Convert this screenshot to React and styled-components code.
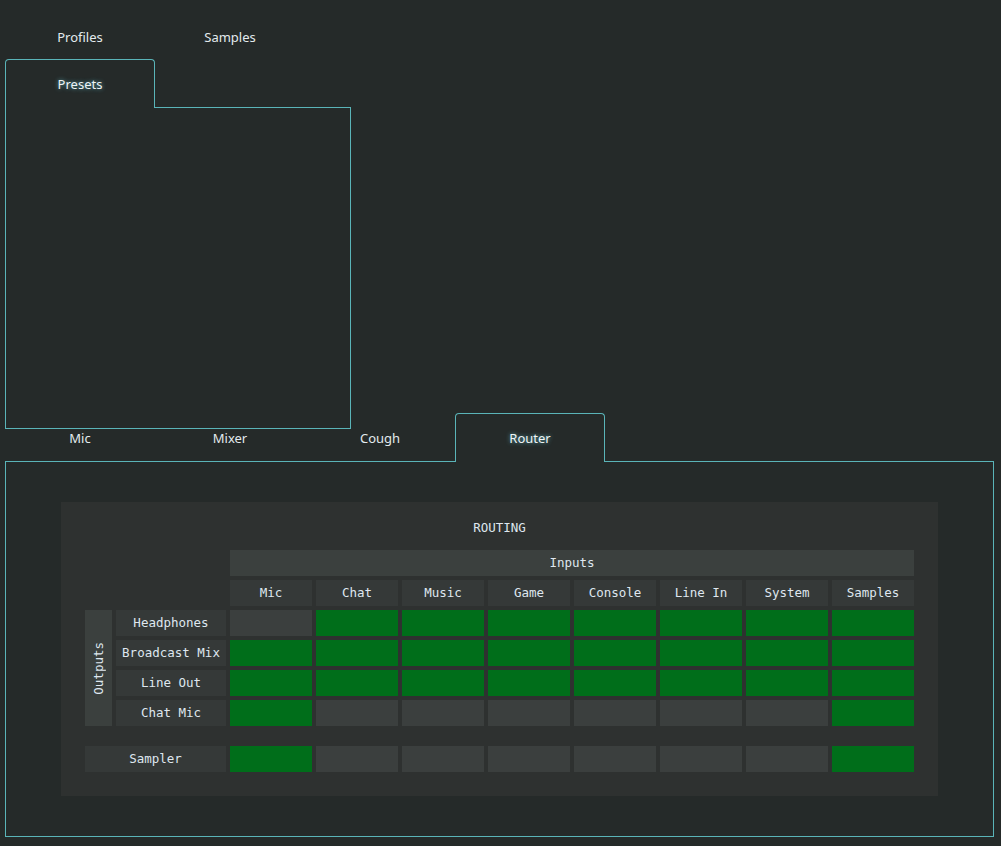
import React from 'react';
import styled, { createGlobalStyle } from 'styled-components';

const inputs = ['Mic', 'Chat', 'Music', 'Game', 'Console', 'Line In', 'System', 'Samples'];

const outputs = [
  { name: 'Headphones', on: [0, 1, 1, 1, 1, 1, 1, 1] },
  { name: 'Broadcast Mix', on: [1, 1, 1, 1, 1, 1, 1, 1] },
  { name: 'Line Out', on: [1, 1, 1, 1, 1, 1, 1, 1] },
  { name: 'Chat Mic', on: [1, 0, 0, 0, 0, 0, 0, 1] },
];

const sampler = [1, 0, 0, 0, 0, 0, 0, 1];

const App = () => {
  return (
    <Page>
      <GlobalStyle />
      <TabWidget>
        <TabRow $height={46}>
          <Tab>Profiles</Tab>
          <Tab>Samples</Tab>
        </TabRow>
        <TabRow $height={48}>
          <Tab $active>Presets</Tab>
        </TabRow>
        <Panel $width={346} $height={322} />
      </TabWidget>

      <TabWidget $overlap>
        <TabRow $height={48}>
          <Tab>Mic</Tab>
          <Tab>Mixer</Tab>
          <Tab>Cough</Tab>
          <Tab $active>Router</Tab>
        </TabRow>
        <Panel $width={989} $height={376}>
          <Card>
            <Title>ROUTING</Title>
            <Matrix>
              <InputsHeader>Inputs</InputsHeader>
              {inputs.map((name, i) => (
                <Label key={name} style={{ gridColumn: i + 3, gridRow: 2 }}>
                  {name}
                </Label>
              ))}
              <OutputsLabel>
                <span>Outputs</span>
              </OutputsLabel>
              {outputs.map((row, r) => (
                <React.Fragment key={row.name}>
                  <Label style={{ gridColumn: 2, gridRow: r + 3 }}>{row.name}</Label>
                  {row.on.map((on, c) => (
                    <Cell key={c} $on={!!on} style={{ gridColumn: c + 3, gridRow: r + 3 }} />
                  ))}
                </React.Fragment>
              ))}
              <SamplerLabel>Sampler</SamplerLabel>
              {sampler.map((on, c) => (
                <Cell key={c} $on={!!on} style={{ gridColumn: c + 3, gridRow: 8 }} />
              ))}
            </Matrix>
          </Card>
        </Panel>
      </TabWidget>
    </Page>
  );
};

const GlobalStyle = createGlobalStyle`
  html, body {
    margin: 0;
    padding: 0;
    background: #252a29;
  }
  body {
    font-family: "Noto Sans", "Open Sans", sans-serif;
    color: #e3eaee;
  }
`;

const Page = styled.div`
  width: 1001px;
  height: 846px;
  box-sizing: border-box;
  padding: 13px 0 0 5px;
  display: flex;
  flex-direction: column;
  overflow: hidden;
`;

const TabWidget = styled.div`
  display: flex;
  flex-direction: column;
  margin-top: ${(p) => (p.$overlap ? '-16px' : '0')};
`;

const TabRow = styled.div`
  display: flex;
  height: ${(p) => p.$height}px;
  align-items: stretch;
`;

const Tab = styled.div`
  width: 150px;
  box-sizing: border-box;
  display: flex;
  align-items: center;
  justify-content: center;
  font-size: 13px;
  color: #e3eaee;
  padding-top: 2px;
  position: relative;
  z-index: 1;
  ${(p) =>
    p.$active &&
    `
    border: 1px solid #5ab4b8;
    border-bottom: none;
    border-radius: 4px 4px 0 0;
    background: #252a29;
    margin-bottom: -1px;
    padding-top: 0;
    color: #eef4f6;
    text-shadow: 0 0 4px rgba(110, 215, 230, 0.75);
  `}
`;

const Panel = styled.div`
  width: ${(p) => p.$width}px;
  height: ${(p) => p.$height}px;
  box-sizing: border-box;
  border: 1px solid #5ab4b8;
  padding: 40px 0 0 55px;
`;

const Card = styled.div`
  width: 877px;
  height: 294px;
  box-sizing: border-box;
  background: #2e3130;
  padding: 16px 24px 24px 24px;
  font-family: "DejaVu Sans Mono", "Liberation Mono", monospace;
  font-size: 12.5px;
  color: #dfe7ef;
`;

const Title = styled.div`
  height: 20px;
  line-height: 20px;
  text-align: center;
  margin-bottom: 12px;
`;

const Matrix = styled.div`
  display: grid;
  grid-template-columns: 27px 110px repeat(8, 82px);
  grid-template-rows: repeat(6, 26px) 12px 26px;
  gap: 4px;
`;

const Block = styled.div`
  display: flex;
  align-items: center;
  justify-content: center;
  white-space: nowrap;
  padding-bottom: 1px;
`;

const InputsHeader = styled(Block)`
  grid-column: 3 / span 8;
  grid-row: 1;
  background: #3b403e;
`;

const Label = styled(Block)`
  background: #353938;
`;

const OutputsLabel = styled(Block)`
  grid-column: 1;
  grid-row: 3 / span 4;
  background: #3b403e;
  padding-bottom: 0;
  span {
    writing-mode: vertical-rl;
    transform: rotate(180deg);
  }
`;

const SamplerLabel = styled(Block)`
  grid-column: 1 / span 2;
  grid-row: 8;
  background: #353938;
`;

const Cell = styled.div`
  background: ${(p) => (p.$on ? '#006e1a' : '#3b3f3e')};
`;

export default App;
